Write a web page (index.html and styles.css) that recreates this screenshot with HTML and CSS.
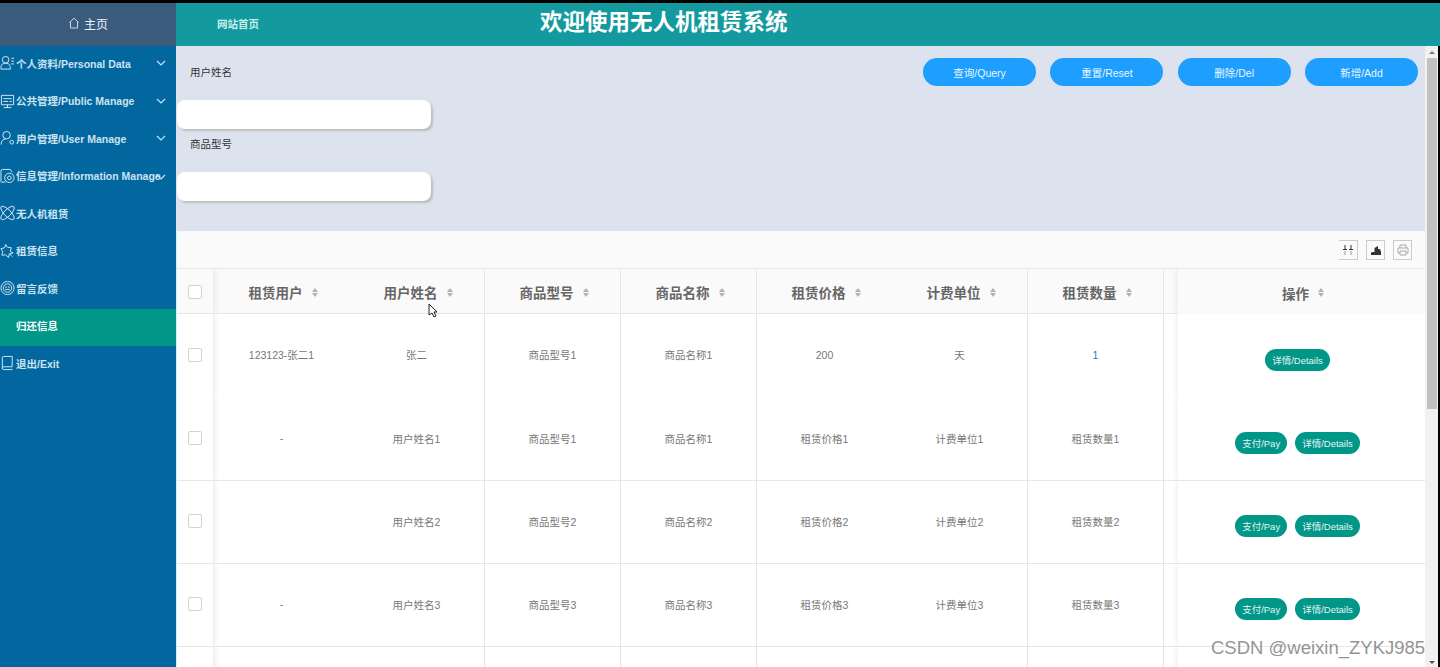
FILE: index.html
```html
<!DOCTYPE html>
<html lang="zh-CN">
<head>
    <meta charset="UTF-8">
    <meta name="viewport" content="width=device-width, initial-scale=1.0">
    <title>无人机租赁系统</title>
    <link rel="stylesheet" href="styles.css">
</head>
<body>
    <div class="topline"></div>
    <div class="app">
        <aside class="sidebar">
            <div class="brand">
                <svg class="brand-icon" viewBox="0 0 12 12"><path d="M1.500 5.500 6 1.200l4.500 4.300M2.500 4.800V11h7V4.800"/></svg>
                <span>主页</span>
            </div>
            <nav class="menu">
                <a class="menu-item">
                    <svg class="menu-icon" viewBox="0 0 16 16"><circle cx="6" cy="4.500" r="3.500"/><path d="M1 14.500c0-5 1-6 5-6s5 1 5 6zM12 3h3M12 6h3M12 9h3"/></svg>
                    <span class="menu-text">个人资料/Personal Data</span>
                    <svg class="chevron" viewBox="0 0 10 6"><path d="M1 1l4 4 4-4"/></svg>
                </a>
                <a class="menu-item">
                    <svg class="menu-icon" viewBox="0 0 16 16"><path d="M1.500 2h13v10h-13zM4 15h8M8 12v3M3.500 5.500h9M3.500 8.500h5M10 8.500h2.500"/></svg>
                    <span class="menu-text">公共管理/Public Manage</span>
                    <svg class="chevron" viewBox="0 0 10 6"><path d="M1 1l4 4 4-4"/></svg>
                </a>
                <a class="menu-item">
                    <svg class="menu-icon" viewBox="0 0 16 16"><circle cx="7" cy="5" r="4"/><path d="M1 15c.5-4 2.500-6 5-6M10.500 12.500a2 2 0 1 0 4 0 2 2 0 1 0-4 0"/></svg>
                    <span class="menu-text">用户管理/User Manage</span>
                    <svg class="chevron" viewBox="0 0 10 6"><path d="M1 1l4 4 4-4"/></svg>
                </a>
                <a class="menu-item">
                    <svg class="menu-icon" viewBox="0 0 16 16"><path d="M1 14V2.500Q1 1 2.500 1H11l2 3M1 14.500h5"/><circle cx="10" cy="10" r="5"/><circle cx="10" cy="10" r="2"/></svg>
                    <span class="menu-text">信息管理/Information Manage</span>
                    <svg class="chevron chevron-tight" viewBox="0 0 10 6"><path d="M1 1l4 4 4-4"/></svg>
                </a>
                <a class="menu-item">
                    <svg class="menu-icon" viewBox="0 0 16 16"><ellipse cx="8" cy="8" rx="9.500" ry="3.500" transform="rotate(45 8 8)"/><ellipse cx="8" cy="8" rx="9.500" ry="3.500" transform="rotate(-45 8 8)"/></svg>
                    <span class="menu-text">无人机租赁</span>
                </a>
                <a class="menu-item">
                    <svg class="menu-icon" viewBox="0 0 16 16"><path d="M6 1 8 4l4 .500-1 4 3 1.500-4 1-1 4-3-3-4 .500 1-4-2-3 4-1z"/><path d="m10 11 3 3"/></svg>
                    <span class="menu-text">租赁信息</span>
                </a>
                <a class="menu-item">
                    <svg class="menu-icon" viewBox="0 0 16 16"><circle cx="8" cy="8" r="7"/><circle cx="8" cy="8" r="4.500"/><path d="M5.500 7h2M8.500 7h2M5.500 9.500h5"/></svg>
                    <span class="menu-text">留言反馈</span>
                </a>
                <a class="menu-item active">
                    <span class="menu-icon"></span>
                    <span class="menu-text">归还信息</span>
                </a>
                <a class="menu-item">
                    <svg class="menu-icon" viewBox="0 0 16 16"><path d="M2.500 14V2.500Q2.500 1 4 1H13v11H4Q2.500 12 2.500 13.500 2.500 15 4 15H13.500"/></svg>
                    <span class="menu-text">退出/Exit</span>
                </a>
            </nav>
        </aside>

        <div class="main">
            <header class="header">
                <a class="home-link">网站首页</a>
                <h1 class="title">欢迎使用无人机租赁系统</h1>
            </header>

            <div class="content">
                <div class="page">
                    <section class="filter">
                        <div class="fields">
                            <label class="field-label">用户姓名</label>
                            <input class="field-input" type="text">
                            <label class="field-label">商品型号</label>
                            <input class="field-input" type="text">
                        </div>
                        <div class="actions">
                            <button class="action-btn">查询/Query</button>
                            <button class="action-btn">重置/Reset</button>
                            <button class="action-btn">删除/Del</button>
                            <button class="action-btn">新增/Add</button>
                        </div>
                    </section>

                    <section class="table-box">
                        <div class="toolbar">
                            <span class="tool tool-cols">
                                <svg viewBox="0 0 12 12"><path d="M3 1v4M9 1v4M1 5.500h4M7 5.500h4"/><path class="pale" d="M3 7v4M9 7v4"/></svg>
                            </span>
                            <span class="tool">
                                <svg viewBox="0 0 12 12"><path class="solid" d="M1 11V8.500L3 8h1.500V4L8 2v3h2l1 3v3z"/></svg>
                            </span>
                            <span class="tool tool-print">
                                <svg viewBox="0 0 12 12"><path d="M3 4V1h6v3M3 9H1V4h10v5H9M3 7h6v4H3z"/></svg>
                            </span>
                        </div>

                        <div class="row row-head">
                            <div class="cell cell-check"><span class="checkbox"></span></div>
                            <div class="cell cell-plain">租赁用户<span class="sort"></span></div>
                            <div class="cell">用户姓名<span class="sort"></span></div>
                            <div class="cell">商品型号<span class="sort"></span></div>
                            <div class="cell">商品名称<span class="sort"></span></div>
                            <div class="cell cell-plain">租赁价格<span class="sort"></span></div>
                            <div class="cell">计费单位<span class="sort"></span></div>
                            <div class="cell">租赁数量<span class="sort"></span></div>
                            <div class="cell cell-gap"></div>
                            <div class="cell cell-op">操作<span class="sort"></span></div>
                        </div>

                        <div class="row row-first">
                            <div class="cell cell-check"><span class="checkbox"></span></div>
                            <div class="cell cell-plain">123123-张二1</div>
                            <div class="cell">张二</div>
                            <div class="cell">商品型号1</div>
                            <div class="cell">商品名称1</div>
                            <div class="cell cell-plain">200</div>
                            <div class="cell">天</div>
                            <div class="cell link">1</div>
                            <div class="cell cell-gap"></div>
                            <div class="cell cell-op"><button class="op-btn">详情/Details</button></div>
                        </div>

                        <div class="row">
                            <div class="cell cell-check"><span class="checkbox"></span></div>
                            <div class="cell cell-plain">-</div>
                            <div class="cell">用户姓名1</div>
                            <div class="cell">商品型号1</div>
                            <div class="cell">商品名称1</div>
                            <div class="cell cell-plain">租赁价格1</div>
                            <div class="cell">计费单位1</div>
                            <div class="cell">租赁数量1</div>
                            <div class="cell cell-gap"></div>
                            <div class="cell cell-op"><button class="op-btn">支付/Pay</button><button class="op-btn">详情/Details</button></div>
                        </div>

                        <div class="row">
                            <div class="cell cell-check"><span class="checkbox"></span></div>
                            <div class="cell cell-plain"></div>
                            <div class="cell">用户姓名2</div>
                            <div class="cell">商品型号2</div>
                            <div class="cell">商品名称2</div>
                            <div class="cell cell-plain">租赁价格2</div>
                            <div class="cell">计费单位2</div>
                            <div class="cell">租赁数量2</div>
                            <div class="cell cell-gap"></div>
                            <div class="cell cell-op"><button class="op-btn">支付/Pay</button><button class="op-btn">详情/Details</button></div>
                        </div>

                        <div class="row">
                            <div class="cell cell-check"><span class="checkbox"></span></div>
                            <div class="cell cell-plain">-</div>
                            <div class="cell">用户姓名3</div>
                            <div class="cell">商品型号3</div>
                            <div class="cell">商品名称3</div>
                            <div class="cell cell-plain">租赁价格3</div>
                            <div class="cell">计费单位3</div>
                            <div class="cell">租赁数量3</div>
                            <div class="cell cell-gap"></div>
                            <div class="cell cell-op"><button class="op-btn">支付/Pay</button><button class="op-btn">详情/Details</button></div>
                        </div>

                        <div class="row">
                            <div class="cell cell-check"></div>
                            <div class="cell cell-plain"></div>
                            <div class="cell"></div>
                            <div class="cell"></div>
                            <div class="cell"></div>
                            <div class="cell cell-plain"></div>
                            <div class="cell"></div>
                            <div class="cell"></div>
                            <div class="cell cell-gap"></div>
                            <div class="cell cell-op"></div>
                        </div>
                    </section>
                </div>

                <div class="scrollbar">
                    <span class="arrow arrow-up"></span>
                    <span class="thumb"></span>
                    <span class="arrow arrow-down"></span>
                </div>
            </div>
        </div>
    </div>

    <svg class="pointer" viewBox="0 0 10 15"><path d="M1 1v11l3-2 2 4 2-1-2-4h3z"/></svg>
    <div class="watermark">CSDN @weixin_ZYKJ985</div>
</body>
</html>
```

FILE: styles.css
```css
* {
    box-sizing: border-box;
}

html,
body {
    height: 100%;
    margin: 0;
    overflow: hidden;
}

body {
    background: #fff;
    font-family: "Liberation Sans", "Noto Sans CJK SC", sans-serif;
    color: #666;
    display: flex;
    flex-direction: column;
}

.topline {
    height: 3px;
    background: #000;
    flex: none;
}

.app {
    flex: 1;
    display: flex;
    min-height: 0;
}

/* sidebar */
.sidebar {
    width: 176px;
    flex: none;
    background: #03679f;
}

.brand {
    height: 43px;
    padding-bottom: 3px;
    background: #3a5b7c;
    color: #eef3f7;
    font-size: 12px;
    display: flex;
    align-items: center;
    justify-content: center;
    gap: 4px;
}

.brand-icon {
    width: 12px;
    height: 12px;
    fill: none;
    stroke: #eef3f7;
    stroke-width: 0.8;
}

.menu-item {
    height: 37.5px;
    padding-bottom: 3px;
    display: flex;
    align-items: center;
    color: #cbe3f0;
    font-size: 10.500px;
    font-weight: bold;
    white-space: nowrap;
    position: relative;
}

.menu-item.active {
    background: #009688;
    color: #fff;
}

.menu-icon {
    width: 15px;
    height: 16px;
    margin-right: 1px;
    flex: none;
    fill: none;
    stroke: #dbeaf3;
    stroke-width: 1;
}

.chevron {
    position: absolute;
    left: 156px;
    top: 14px;
    width: 10px;
    height: 6px;
    fill: none;
    stroke: #cbe3f0;
    stroke-width: 1.200;
}

.chevron-tight {
    top: 15px;
}

/* top bar */
.main {
    flex: 1;
    min-width: 0;
    display: flex;
    flex-direction: column;
}

.header {
    height: 43px;
    padding-bottom: 3px;
    flex: none;
    background: #149a9e;
    display: flex;
    align-items: center;
    color: #fff;
}

.home-link {
    margin-left: 41px;
    font-size: 10.500px;
    font-weight: bold;
    color: #c8eeee;
}

.title {
    margin: 0 0 0 281px;
    font-size: 22.500px;
    line-height: 1;
    font-weight: bold;
}

/* content */
.content {
    flex: 1;
    display: flex;
    min-height: 0;
}

.page {
    flex: 1;
    min-width: 0;
    overflow: hidden;
}

.filter {
    height: 185px;
    background: #dce3ee;
    display: flex;
    justify-content: space-between;
    color: #333;
    font-size: 10.500px;
}

.fields {
    width: 255px;
    padding: 11px 0 0 1px;
    display: flex;
    flex-direction: column;
}

.field-label {
    height: 26px;
    margin-top: 2px;
    padding-left: 13px;
    line-height: 26px;
}

.field-input {
    display: block;
    flex: none;
    width: 254px;
    height: 29px;
    margin-top: 15px;
    border: 0;
    border-radius: 8px;
    background: #fff;
    box-shadow: 2px 2px 2px #bdbdbd;
}

.actions {
    display: flex;
    gap: 14.300px;
    padding: 12px 7px 0 0;
}

.action-btn {
    width: 113px;
    height: 28px;
    border: 0;
    border-radius: 14px;
    background: #1e9fff;
    color: #eaf6ff;
    font: inherit;
    font-size: 10.500px;
}

/* table */
.table-box {
    border-left: 1px solid #bdf6fb;
}

.toolbar {
    height: 38px;
    background: #fafafa;
    border-bottom: 1px solid #e6e6e6;
    display: flex;
    justify-content: flex-end;
    align-items: flex-start;
    gap: 8px;
    padding: 9px 13px 0 0;
}

.tool {
    width: 19px;
    height: 20px;
    border: 1px solid #ccc;
    display: flex;
    align-items: center;
    justify-content: center;
}

.tool-cols {
    border-left: 0;
}

.tool svg {
    width: 12px;
    height: 12px;
    fill: none;
    stroke: #333;
    stroke-width: 1;
}

.tool .solid {
    fill: #333;
    stroke: none;
}

.tool .pale {
    stroke: #999;
}

.tool-print svg {
    stroke: #aaa;
}

.row {
    display: flex;
    height: 83px;
    font-size: 10.500px;
    color: #777;
    border-bottom: 1px solid #e6e6e6;
}

.row-head {
    height: 45px;
    background: #fafafa;
    color: #666;
    font-size: 13.500px;
    font-weight: bold;
}

.row-first {
    height: 84px;
    border-bottom: 0;
}

.cell {
    width: 136px;
    flex: none;
    padding-bottom: 2px;
    display: flex;
    align-items: center;
    justify-content: center;
    border-right: 1px solid #e6e6e6;
}

.row-first .cell {
    padding-bottom: 3px;
}

.row-head .cell {
    padding: 2px 0 0 4px;
}

.cell-plain {
    width: 135px;
    border-right: 0;
}

.cell-check {
    width: 37px;
    border-right: 1px solid #eee;
    box-shadow: 2px 0 5px rgba(0, 0, 0, 0.06);
    clip-path: inset(0 -7px 0 0);
}

.row .cell-check {
    padding-right: 1px;
    padding-left: 0;
}

.cell-gap {
    width: 14px;
    border-right: 0;
}

.cell-op {
    flex: 1;
    width: auto;
    border-right: 0;
    gap: 8px;
    padding-right: 8px;
    box-shadow: -2px 0 5px rgba(0, 0, 0, 0.06);
    clip-path: inset(0 0 0 -7px);
}

.row-head .cell-op {
    gap: 0;
    margin-bottom: -1px;
    background: #fafafa;
}

.cell-op .op-btn {
    margin-top: 10px;
}

.link {
    color: #1e7fc2;
}

.checkbox {
    width: 14px;
    height: 14px;
    border: 1px solid #d2d2d2;
    border-radius: 2px;
    background: #fff;
}

.sort {
    position: relative;
    width: 7px;
    height: 9px;
    margin-left: 9px;
}

.sort::before,
.sort::after {
    content: "";
    position: absolute;
    left: 0;
    border-left: 3.500px solid transparent;
    border-right: 3.500px solid transparent;
}

.sort::before {
    top: 0;
    border-bottom: 4px solid #b2b2b2;
}

.sort::after {
    bottom: 0;
    border-top: 4px solid #b2b2b2;
}

.op-btn {
    height: 22px;
    padding: 0 7px;
    border: 0;
    border-radius: 11px;
    background: #009688;
    color: #e6f5f3;
    font: inherit;
    font-size: 9.500px;
    white-space: nowrap;
}

/* scrollbar */
.scrollbar {
    width: 15px;
    flex: none;
    background: #f1f1f1;
    border-right: 2px solid #000;
    display: flex;
    flex-direction: column;
    align-items: center;
    padding: 5px 0 3px;
}

.thumb {
    width: 10px;
    height: 351px;
    margin-top: 4px;
    background: #c1c1c1;
}

.arrow {
    width: 0;
    height: 0;
    border-left: 3px solid transparent;
    border-right: 3px solid transparent;
}

.arrow-up {
    border-bottom: 3px solid #777;
}

.arrow-down {
    margin-top: auto;
    border-top: 3px solid #555;
}

/* things lying over the page */
.pointer {
    position: absolute;
    left: 428px;
    top: 303px;
    width: 10px;
    height: 15px;
    fill: #fff;
    stroke: #222;
    stroke-width: 1;
}

.watermark {
    position: absolute;
    left: 1211px;
    top: 637px;
    font-family: "Liberation Sans", sans-serif;
    font-size: 18.500px;
    color: rgba(120, 120, 120, 0.8);
    white-space: nowrap;
}
```
